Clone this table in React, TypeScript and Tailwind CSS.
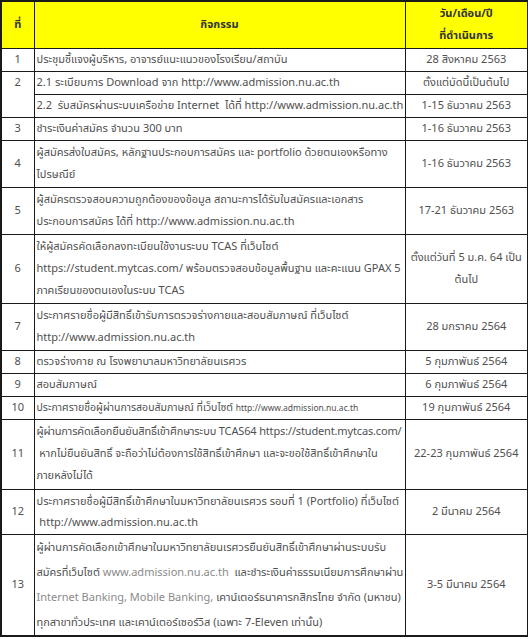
import React from "react";

type Row = {
  no: string;
  lines: React.ReactNode[];
  date: string[];
  h: string;
  line?: string;
};

const rows: Row[] = [
  { no: "1", lines: ["ประชุมชี้แจงผู้บริหาร, อาจารย์แนะแนวของโรงเรียน/สถาบัน"], date: ["28 สิงหาคม 2563"], h: "h-[23px]" },
  { no: "3", lines: ["ชำระเงินค่าสมัคร จำนวน 300 บาท"], date: ["1-16 ธันวาคม 2563"], h: "h-[23px]" },
  {
    no: "4",
    lines: ["ผู้สมัครส่งใบสมัคร, หลักฐานประกอบการสมัคร และ portfolio ด้วยตนเองหรือทาง", "ไปรษณีย์"],
    date: ["1-16 ธันวาคม 2563"],
    h: "h-[47px]",
  },
  {
    no: "5",
    lines: ["ผู้สมัครตรวจสอบความถูกต้องของข้อมูล สถานะการได้รับใบสมัครและเอกสาร", "ประกอบการสมัคร ได้ที่ http://www.admission.nu.ac.th"],
    date: ["17-21 ธันวาคม 2563"],
    h: "h-[47px]",
  },
  {
    no: "6",
    lines: [
      "ให้ผู้สมัครคัดเลือกลงทะเบียนใช้งานระบบ TCAS ที่เว็บไซต์",
      "https://student.mytcas.com/ พร้อมตรวจสอบข้อมูลพื้นฐาน และคะแนน GPAX 5",
      "ภาคเรียนของตนเองในระบบ TCAS",
    ],
    date: ["ตั้งแต่วันที่ 5 ม.ค. 64 เป็น", "ต้นไป"],
    h: "h-[69px]",
  },
  {
    no: "7",
    lines: ["ประกาศรายชื่อผู้มีสิทธิ์เข้ารับการตรวจร่างกายและสอบสัมภาษณ์ ที่เว็บไซต์", "http://www.admission.nu.ac.th"],
    date: ["28 มกราคม 2564"],
    h: "h-[47px]",
  },
  { no: "8", lines: ["ตรวจร่างกาย ณ โรงพยาบาลมหาวิทยาลัยนเรศวร"], date: ["5 กุมภาพันธ์ 2564"], h: "h-[23px]" },
  { no: "9", lines: ["สอบสัมภาษณ์"], date: ["6 กุมภาพันธ์ 2564"], h: "h-[23px]" },
  {
    no: "10",
    lines: [
      <span className="text-[10.5px]">
        ประกาศรายชื่อผู้ผ่านการสอบสัมภาษณ์ ที่เว็บไซต์ <span className="text-[8.5px]">http://www.admission.nu.ac.th</span>
      </span>,
    ],
    date: ["19 กุมภาพันธ์ 2564"],
    h: "h-[23px]",
  },
  {
    no: "11",
    lines: [
      <span className="tracking-[-0.15px]">ผู้ผ่านการคัดเลือกยืนยันสิทธิ์เข้าศึกษาระบบ TCAS64 https://student.mytcas.com/</span>,
      "\u00a0หากไม่ยืนยันสิทธิ์ จะถือว่าไม่ต้องการใช้สิทธิ์เข้าศึกษา และจะขอใช้สิทธิ์เข้าศึกษาใน",
      "ภายหลังไม่ได้",
    ],
    date: ["22-23 กุมภาพันธ์ 2564"],
    h: "h-[70px]",
  },
  {
    no: "12",
    lines: [
      "ประกาศรายชื่อผู้มีสิทธิ์เข้าศึกษาในมหาวิทยาลัยนเรศวร รอบที่ 1 (Portfolio) ที่เว็บไซต์",
      "\u00a0http://www.admission.nu.ac.th",
    ],
    date: ["2 มีนาคม 2564"],
    h: "h-[45px]",
    line: "h-[21px] leading-[21px]",
  },
  {
    no: "13",
    lines: [
      "ผู้ผ่านการคัดเลือกเข้าศึกษาในมหาวิทยาลัยนเรศวรยืนยันสิทธิ์เข้าศึกษาผ่านระบบรับ",
      <>
        สมัครที่เว็บไซต์ <span className="text-[#8a8a8a]">www.admission.nu.ac.th</span>&nbsp; และชำระเงินค่าธรรมเนียมการศึกษาผ่าน
      </>,
      <>
        <span className="text-[#8a8a8a]">Internet Banking, Mobile Banking,</span> เคาน์เตอร์ธนาคารกสิกรไทย จำกัด (มหาชน)
      </>,
      "ทุกสาขาทั่วประเทศ และเคาน์เตอร์เซอร์วิส (เฉพาะ 7-Eleven เท่านั้น)",
    ],
    date: ["3-5 มีนาคม 2564"],
    h: "h-[100px]",
    line: "h-[25px] leading-[25px]",
  },
];

const cell = "border border-[#1a1a1a] p-0 overflow-hidden";

function BodyRow({ r }: { r: Row }) {
  const line = r.line ?? "h-[22px] leading-[22px]";
  return (
    <tr className={r.h}>
      <td className={`${cell} text-center align-middle`}>
        <div className="h-[20px] leading-[20px]">{r.no}</div>
      </td>
      <td className={`${cell} pl-[2px] align-middle whitespace-nowrap`}>
        {r.lines.map((l, i) => (
          <div key={i} className={line}>
            {l}
          </div>
        ))}
      </td>
      <td className={`${cell} text-center align-middle whitespace-nowrap`}>
        {r.date.map((d, i) => (
          <div key={i} className="h-[22px] leading-[22px]">
            {d}
          </div>
        ))}
      </td>
    </tr>
  );
}

export default function App() {
  const [first, ...rest] = rows;
  return (
    <div
      className="w-[528px] h-[639px] overflow-hidden bg-white text-[11px] text-[#505050]"
      style={{ fontFamily: "Tahoma, 'Noto Sans Thai', 'DejaVu Sans', sans-serif" }}
    >
      <table className="w-[527px] border-collapse border-[2px] border-[#1a1a1a] table-fixed">
        <colgroup>
          <col className="w-[33px]" />
          <col className="w-[371px]" />
          <col className="w-[123px]" />
        </colgroup>
        <thead>
          <tr className="h-[47px] bg-[#ffff00] text-[#333] font-semibold">
            <th className={`${cell} text-center`}>
              <div className="h-[20px] leading-[20px]">ที่</div>
            </th>
            <th className={`${cell} text-center`}>
              <div className="h-[20px] leading-[20px]">กิจกรรม</div>
            </th>
            <th className={`${cell} text-center`}>
              <div className="h-[22px] leading-[22px]">วัน/เดือน/ปี</div>
              <div className="h-[22px] leading-[22px]">ที่ดำเนินการ</div>
            </th>
          </tr>
        </thead>
        <tbody>
          <BodyRow r={first} />
          <tr className="h-[23px]">
            <td rowSpan={2} className={`${cell} text-center align-top`}>
              <div className="h-[21px] leading-[21px]">2</div>
            </td>
            <td className={`${cell} pl-[2px] whitespace-nowrap`}>
              <div className="h-[20px] leading-[20px]">2.1 ระเบียบการ Download จาก http://www.admission.nu.ac.th</div>
            </td>
            <td className={`${cell} text-center whitespace-nowrap`}>
              <div className="h-[20px] leading-[20px]">ตั้งแต่บัดนี้เป็นต้นไป</div>
            </td>
          </tr>
          <tr className="h-[23px]">
            <td className={`${cell} pl-[2px] whitespace-nowrap`}>
              <div className="h-[20px] leading-[20px]">
                2.2&nbsp; รับสมัครผ่านระบบเครือข่าย Internet&nbsp; ได้ที่ http://www.admission.nu.ac.th
              </div>
            </td>
            <td className={`${cell} text-center whitespace-nowrap`}>
              <div className="h-[20px] leading-[20px]">1-15 ธันวาคม 2563</div>
            </td>
          </tr>
          {rest.map((r) => (
            <BodyRow key={r.no} r={r} />
          ))}
        </tbody>
      </table>
    </div>
  );
}
